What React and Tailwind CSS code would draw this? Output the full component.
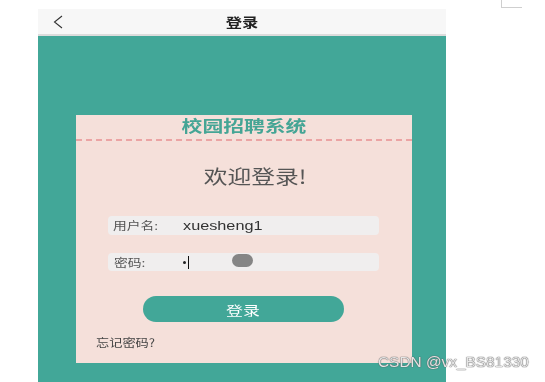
import React from "react";

const cjk = { fontFamily: '"Noto Sans CJK SC", "Noto Sans", sans-serif' };

export default function App() {
  return (
    <div className="relative w-[545px] h-[382px] bg-white overflow-hidden" style={cjk}>
      {/* corner mark */}
      <div className="absolute left-[501px] top-0 w-[21px] h-[8px] border-l border-b border-[#cfcfcf]" />

      <div className="ml-[38px] pt-[9px] w-[408px] flex flex-col h-full">
        {/* header */}
        <div className="h-[27px] bg-[#f7f7f7] border-b-2 border-[#dcdcdc] relative flex items-center justify-center">
          <svg className="absolute left-[15px] top-[6px]" width="10" height="14" viewBox="0 0 10 14">
            <polyline points="9,1 1.5,7 9,13" fill="none" stroke="#333" strokeWidth="1.1" />
          </svg>
          <span className="inline-block scale-x-125 text-[13px] font-bold text-[#222] leading-none">登录</span>
        </div>

        {/* teal area */}
        <div className="flex-1 bg-[#42a798] pt-[79px] pl-[38px]">
          <div className="w-[336px] h-[248px] bg-[#f5e0da] flex flex-col">
            <div className="h-[26px] border-b-2 border-dashed border-[#eba4a4] flex items-start justify-center">
              <span className="inline-block scale-x-130 text-[16px] font-bold text-[#45a595] leading-[20px]">校园招聘系统</span>
            </div>
            <div className="mt-[23px] h-[24px] flex justify-center items-center pl-[22px]">
              <span className="inline-block scale-x-125 text-[19px] text-[#555] leading-[24px]">欢迎登录!</span>
            </div>

            <div className="mt-[28px] ml-[32px] w-[271px] h-[19px] bg-[#f0eeee] rounded-[4px] flex items-center relative">
              <span className="inline-block origin-left scale-x-125 text-[11px] text-[#555] ml-[5px] leading-none">用户名:</span>
              <span className="absolute left-[75px] top-[2px] inline-block origin-left scale-x-125 text-[13px] text-[#333] leading-[15px]" style={{ fontFamily: '"Liberation Sans", Arial, sans-serif' }}>xuesheng1</span>
            </div>

            <div className="mt-[18px] ml-[32px] w-[271px] h-[18px] bg-[#f0eeee] rounded-[4px] flex items-center relative">
              <span className="inline-block origin-left scale-x-125 text-[11px] text-[#555] ml-[6px] leading-none">密码:</span>
              <span className="absolute left-[75px] top-[8px] w-[3px] h-[3px] rounded-full bg-[#222]" />
              <span className="absolute left-[80px] top-[3px] w-[1px] h-[13px] bg-[#111]" />
              <span className="absolute left-[124px] top-[1px] w-[21px] h-[13px] rounded-full bg-[#858585] blur-[0.5px]" />
            </div>

            <div className="mt-[25px] ml-[67px] w-[201px] h-[26px] rounded-full bg-[#42a798] flex items-center justify-center">
              <span className="inline-block scale-x-130 text-[13px] text-white leading-none">登录</span>
            </div>

            <div className="mt-[12px] ml-[20px] h-[16px] flex items-center">
              <span className="inline-block origin-left scale-x-120 text-[11px] text-[#444] leading-none">忘记密码?</span>
            </div>
          </div>
        </div>
      </div>

      {/* watermark */}
      <div
        className="absolute left-[378px] top-[353px] origin-left scale-x-110 text-[14px] leading-[18px] text-[#e6e6e6] whitespace-nowrap"
        style={{ fontFamily: '"Liberation Sans", Arial, sans-serif', textShadow: "0 0 1px #555, 0 0 1px #555" }}
      >
        CSDN @vx_BS81330
      </div>
    </div>
  );
}
